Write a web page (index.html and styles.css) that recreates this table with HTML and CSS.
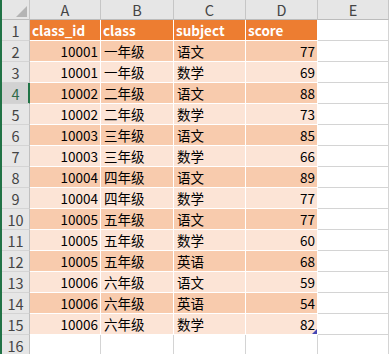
FILE: index.html
```html
<!DOCTYPE html>
<html>
<head>
<meta charset="utf-8">
<link rel="stylesheet" href="styles.css">
</head>
<body>
<div class="sheet">
  <div class="corner"><span class="tri"></span></div>
  <div class="ch">A</div><div class="ch">B</div><div class="ch">C</div><div class="ch">D</div><div class="ch">E</div>

  <div class="rh">1</div><div class="c hd">class_id</div><div class="c hd">class</div><div class="c hd">subject</div><div class="c hd">score</div><div class="e"></div>
  <div class="rh">2</div><div class="c dk num">10001</div><div class="c dk">一年级</div><div class="c dk">语文</div><div class="c dk num">77</div><div class="e"></div>
  <div class="rh">3</div><div class="c lt num">10001</div><div class="c lt">一年级</div><div class="c lt">数学</div><div class="c lt num">69</div><div class="e"></div>
  <div class="rh sel">4</div><div class="c dk num">10002</div><div class="c dk">二年级</div><div class="c dk">语文</div><div class="c dk num">88</div><div class="e"></div>
  <div class="rh">5</div><div class="c lt num">10002</div><div class="c lt">二年级</div><div class="c lt">数学</div><div class="c lt num">73</div><div class="e"></div>
  <div class="rh">6</div><div class="c dk num">10003</div><div class="c dk">三年级</div><div class="c dk">语文</div><div class="c dk num">85</div><div class="e"></div>
  <div class="rh">7</div><div class="c lt num">10003</div><div class="c lt">三年级</div><div class="c lt">数学</div><div class="c lt num">66</div><div class="e"></div>
  <div class="rh">8</div><div class="c dk num">10004</div><div class="c dk">四年级</div><div class="c dk">语文</div><div class="c dk num">89</div><div class="e"></div>
  <div class="rh">9</div><div class="c lt num">10004</div><div class="c lt">四年级</div><div class="c lt">数学</div><div class="c lt num">77</div><div class="e"></div>
  <div class="rh">10</div><div class="c dk num">10005</div><div class="c dk">五年级</div><div class="c dk">语文</div><div class="c dk num">77</div><div class="e"></div>
  <div class="rh">11</div><div class="c lt num">10005</div><div class="c lt">五年级</div><div class="c lt">数学</div><div class="c lt num">60</div><div class="e"></div>
  <div class="rh">12</div><div class="c dk num">10005</div><div class="c dk">五年级</div><div class="c dk">英语</div><div class="c dk num">68</div><div class="e"></div>
  <div class="rh">13</div><div class="c lt num">10006</div><div class="c lt">六年级</div><div class="c lt">语文</div><div class="c lt num">59</div><div class="e"></div>
  <div class="rh">14</div><div class="c dk num">10006</div><div class="c dk">六年级</div><div class="c dk">英语</div><div class="c dk num">54</div><div class="e"></div>
  <div class="rh">15</div><div class="c lt num">10006</div><div class="c lt">六年级</div><div class="c lt">数学</div><div class="c lt num last">82<span class="handle"></span></div><div class="e"></div>
  <div class="rh">16</div><div class="e"></div><div class="e"></div><div class="e"></div><div class="e"></div><div class="e"></div>
</div>
</body>
</html>
```
FILE: styles.css
```css
html, body {
  margin: 0;
  padding: 0;
  background: #ffffff;
}
body {
  width: 389px;
  height: 354px;
  overflow: hidden;
  border-left: 2px solid #217346;
  box-sizing: border-box;
  font-family: "Noto Sans CJK SC", "Noto Sans", sans-serif;
}
.sheet {
  display: grid;
  grid-template-columns: 28px 71px 73px 72px 72px 1fr;
  grid-template-rows: 20px repeat(16, 21px);
}
.sheet > div {
  box-sizing: border-box;
  min-width: 0;
  white-space: nowrap;
  overflow: hidden;
}
.corner {
  position: relative;
  background: #e6e6e6;
  border-right: 1px solid #c6c6c6;
  border-bottom: 1px solid #bcbcbc;
}
.tri {
  position: absolute;
  right: 2px;
  bottom: 2px;
  width: 11px;
  height: 11px;
  background: #b4b4b4;
  clip-path: polygon(100% 0, 100% 100%, 0 100%);
}
.ch {
  background: #e6e6e6;
  border-right: 1px solid #c6c6c6;
  border-bottom: 1px solid #bcbcbc;
  color: #444444;
  font-size: 14.5px;
  line-height: 20px;
  text-align: center;
}
.rh {
  background: #e6e6e6;
  border-right: 1px solid #c0c0c0;
  border-bottom: 1px solid #d4d4d4;
  color: #444444;
  font-size: 14.5px;
  line-height: 21px;
  text-align: center;
}
.rh.sel {
  background: #d2d2d2;
  color: #2f6a47;
  border-right-color: #217346;
  box-shadow: inset -1px 0 0 #217346;
}
.c {
  border-right: 1px solid #ffffff;
  border-bottom: 1px solid #ffffff;
  font-size: 13.5px;
  line-height: 20px;
  padding: 0 3px;
  color: #000000;
}
.num {
  text-align: right;
  padding-right: 2px;
}
.hd {
  background: #ed7d31;
  color: #ffffff;
  font-weight: bold;
  padding-left: 2px;
}
.dk {
  background: #f8cbad;
}
.lt {
  background: #fce4d6;
}
.e {
  background: #ffffff;
  border-right: 1px solid #d4d4d4;
  border-bottom: 1px solid #d4d4d4;
}
.last {
  position: relative;
}
.handle {
  position: absolute;
  right: 0;
  bottom: 0;
  width: 5px;
  height: 5px;
  background: #4646b4;
  clip-path: polygon(100% 0, 100% 100%, 0 100%);
}
```
